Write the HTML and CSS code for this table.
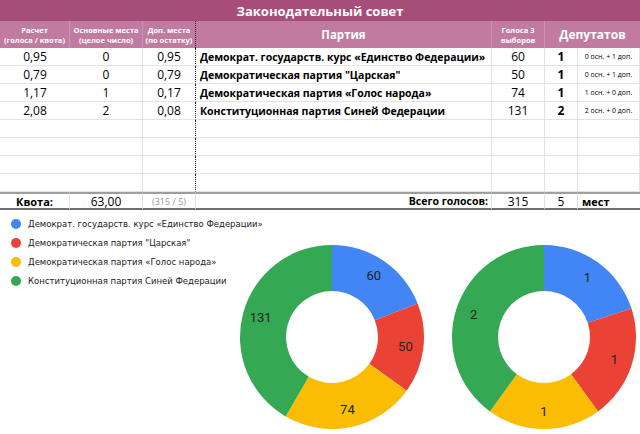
FILE: index.html
```html
<!DOCTYPE html>
<html lang="ru">
<head>
<meta charset="utf-8">
<title>Законодательный совет</title>
<link rel="stylesheet" href="styles.css">
</head>
<body>
<div class="sheet">
  <div class="title">Законодательный совет</div>

  <div class="hd small">Расчет<br>(голоса / квота)</div>
  <div class="hd small">Основные места<br>(целое число)</div>
  <div class="hd small dotted">Доп. места<br>(по остатку)</div>
  <div class="hd big">Партия</div>
  <div class="hd small">Голоса 3<br>выборов</div>
  <div class="hd big span2">Депутатов</div>

  <div class="c num">0,95</div><div class="c num">0</div><div class="c num dotted">0,95</div>
  <div class="c party">Демократ. государств. курс «Единство Федерации»</div>
  <div class="c num">60</div><div class="c num b">1</div><div class="c tiny">0 осн. + 1 доп.</div>

  <div class="c num">0,79</div><div class="c num">0</div><div class="c num dotted">0,79</div>
  <div class="c party">Демократическая партия "Царская"</div>
  <div class="c num">50</div><div class="c num b">1</div><div class="c tiny">0 осн. + 1 доп.</div>

  <div class="c num">1,17</div><div class="c num">1</div><div class="c num dotted">0,17</div>
  <div class="c party">Демократическая партия «Голос народа»</div>
  <div class="c num">74</div><div class="c num b">1</div><div class="c tiny">1 осн. + 0 доп.</div>

  <div class="c num">2,08</div><div class="c num">2</div><div class="c num dotted">0,08</div>
  <div class="c party">Конституционная партия Синей Федерации</div>
  <div class="c num">131</div><div class="c num b">2</div><div class="c tiny">2 осн. + 0 доп.</div>

  <div class="c"></div><div class="c"></div><div class="c dotted"></div><div class="c"></div><div class="c"></div><div class="c"></div><div class="c"></div>
  <div class="c"></div><div class="c"></div><div class="c dotted"></div><div class="c"></div><div class="c"></div><div class="c"></div><div class="c"></div>
  <div class="c"></div><div class="c"></div><div class="c dotted"></div><div class="c"></div><div class="c"></div><div class="c"></div><div class="c"></div>
  <div class="c"></div><div class="c"></div><div class="c dotted"></div><div class="c"></div><div class="c"></div><div class="c"></div><div class="c"></div>

  <div class="f lbl">Квота:</div>
  <div class="f num">63,00</div>
  <div class="f note">(315 / 5)</div>
  <div class="f total noline">Всего голосов:</div>
  <div class="f num">315</div>
  <div class="f num">5</div>
  <div class="f unit">мест</div>
</div>

<div class="charts">
  <ul class="legend">
    <li><span class="dot blue"></span>Демократ. государств. курс «Единство Федерации»</li>
    <li><span class="dot red"></span>Демократическая партия "Царская"</li>
    <li><span class="dot yellow"></span>Демократическая партия «Голос народа»</li>
    <li><span class="dot green"></span>Конституционная партия Синей Федерации</li>
  </ul>

  <svg class="donut" width="190" height="190" viewBox="0 0 190 190">
    <path class="s-blue" d="M95 3 A92 92 0 0 1 180.64 61.39 L137.82 78.19 A46 46 0 0 0 95 49 Z"/>
    <path class="s-red" d="M180.64 61.39 A92 92 0 0 1 169.70 148.70 L132.35 121.85 A46 46 0 0 0 137.82 78.19 Z"/>
    <path class="s-yellow" d="M169.70 148.70 A92 92 0 0 1 48.60 174.44 L71.80 134.72 A46 46 0 0 0 132.35 121.85 Z"/>
    <path class="s-green" d="M48.60 174.44 A92 92 0 0 1 95 3 L95 49 A46 46 0 0 0 71.80 134.72 Z"/>
    <text x="136.7" y="33.9">60</text>
    <text x="168.4" y="104.2">50</text>
    <text x="110.4" y="167.4">74</text>
    <text x="23.6" y="75.7">131</text>
  </svg>

  <svg class="donut second" width="190" height="190" viewBox="0 0 190 190">
    <path class="s-blue" d="M95 3 A92 92 0 0 1 182.50 66.57 L138.75 80.79 A46 46 0 0 0 95 49 Z"/>
    <path class="s-red" d="M182.50 66.57 A92 92 0 0 1 149.08 169.43 L122.04 132.21 A46 46 0 0 0 138.75 80.79 Z"/>
    <path class="s-yellow" d="M149.08 169.43 A92 92 0 0 1 40.92 169.43 L67.96 132.21 A46 46 0 0 0 122.04 132.21 Z"/>
    <path class="s-green" d="M40.92 169.43 A92 92 0 0 1 95 3 L95 49 A46 46 0 0 0 67.96 132.21 Z"/>
    <text x="138.5" y="35.1">1</text>
    <text x="165.4" y="117.9">1</text>
    <text x="95" y="169">1</text>
    <text x="24.6" y="72.1">2</text>
  </svg>
</div>
</body>
</html>
```

FILE: styles.css
```css
* { box-sizing: border-box; }
html, body { margin: 0; padding: 0; background: #fff; }
body { font-family: "Open Sans", "DejaVu Sans", sans-serif; color: #000; width: 640px; height: 434px; overflow: hidden; }

.sheet {
  display: grid;
  grid-template-columns: 70px 73px 53px 296px 53px 33px 62px;
  grid-template-rows: 21px 27px repeat(8, 18px) 18px;
}

.title {
  grid-column: 1 / -1;
  background: #a64d79;
  color: #fff;
  font-weight: 700;
  font-size: 13px;
  display: flex;
  align-items: center;
  justify-content: center;
}

.hd {
  background: #c27ba0;
  color: #fff;
  font-weight: 700;
  display: flex;
  align-items: center;
  justify-content: center;
  text-align: center;
  border-right: 1px solid #cd93b2;
}
.hd.small { font-size: 7.5px; line-height: 10px; }
.hd.big { font-size: 11.5px; }
.hd.span2 { grid-column: span 2; font-size: 12px; border-right: none; }

.c {
  border-right: 1px solid #e2e2e2;
  border-bottom: 1px solid #e2e2e2;
  display: flex;
  align-items: center;
  justify-content: center;
  white-space: nowrap;
  overflow: hidden;
}
.c:nth-child(7n+8) { border-right: none; }
.dotted { border-right: 1px dotted #222 !important; }

.num { font-size: 12px; }
.b { font-weight: 700; }
.party { justify-content: flex-start; padding-left: 4px; font-weight: 700; font-size: 10.5px; }
.tiny { font-size: 7px; }

.f {
  border-top: 2px solid #9e9e9e;
  border-bottom: 2px solid #6f6f6f;
  border-right: 1px solid #e2e2e2;
  display: flex;
  align-items: center;
  justify-content: center;
  white-space: nowrap;
}
.f.lbl { font-weight: 700; font-size: 11px; }
.f.note { font-size: 9px; color: #999; }
.f.total { justify-content: flex-end; padding-right: 3px; font-weight: 700; font-size: 10.5px; border-right: 1px solid #e2e2e2; }
.f.unit { justify-content: flex-start; padding-left: 4px; font-weight: 700; font-size: 11px; border-right: none; }

.charts {
  display: flex;
  align-items: flex-start;
  height: 224px;
}

.legend {
  list-style: none;
  margin: 0;
  padding: 4px 0 0 11px;
  width: 237px;
  flex: none;
  font-family: "DejaVu Sans", sans-serif;
  font-size: 8.5px;
  color: #222;
}
.legend li {
  height: 19px;
  display: flex;
  align-items: center;
  gap: 7px;
  white-space: nowrap;
}
.dot { width: 10px; height: 10px; border-radius: 50%; flex: none; }
.blue { background: #4285f4; }
.red { background: #ea4335; }
.yellow { background: #fbbc04; }
.green { background: #34a853; }

.donut { flex: none; margin-top: 32px; display: block; }
.donut.second { margin-left: 22px; }
.donut text {
  font-family: Roboto, sans-serif;
  font-size: 13px;
  fill: #222;
  text-anchor: middle;
  dominant-baseline: central;
}
.s-blue { fill: #4285f4; }
.s-red { fill: #ea4335; }
.s-yellow { fill: #fbbc04; }
.s-green { fill: #34a853; }
```
